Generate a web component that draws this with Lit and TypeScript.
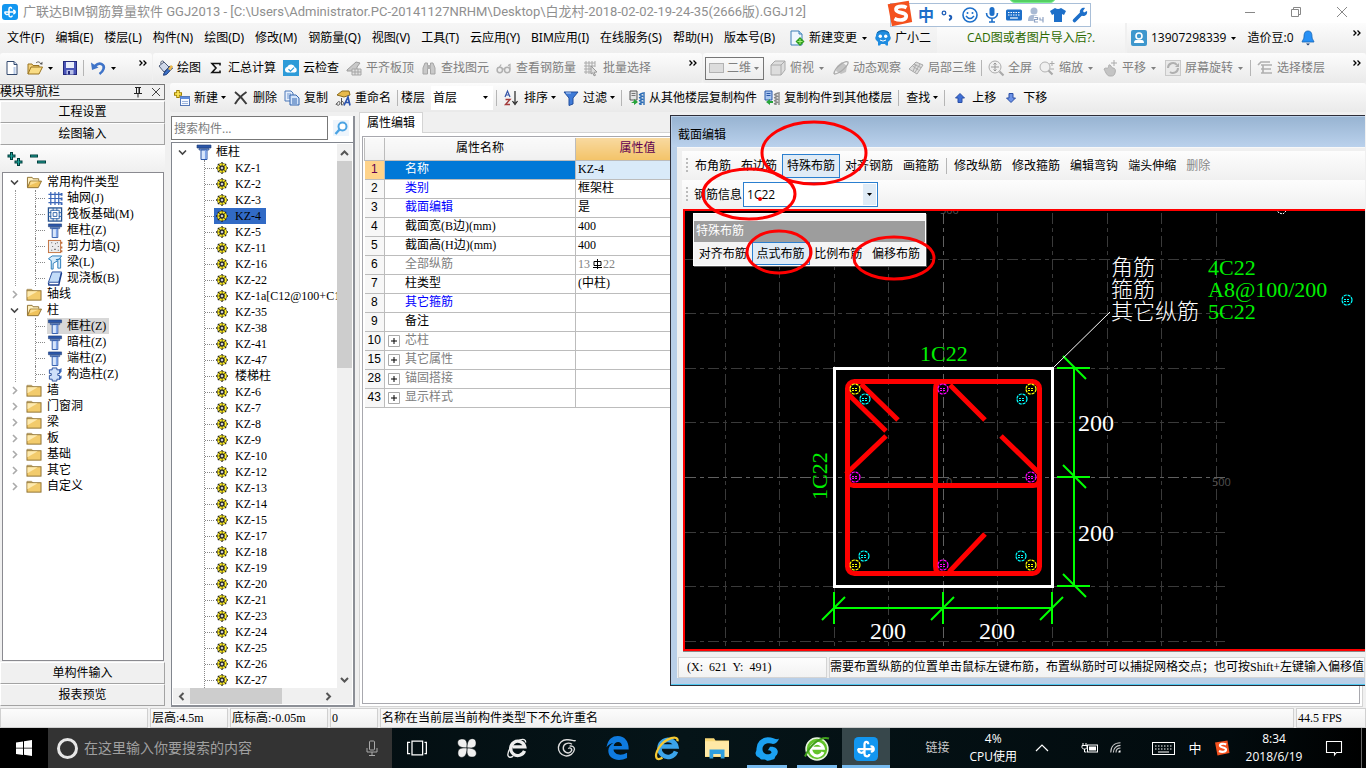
import { LitElement, html, css, svg, nothing, TemplateResult } from "lit";
import { customElement, state } from "lit/decorators.js";
import { classMap } from "lit/directives/class-map.js";

/* ---------- icon set, 16 x 16 unless noted ---------- */
const blueStroke = "#1f5fb8";
const shapes: Record<string, TemplateResult> = {
  app: svg`<rect width="16" height="16" rx="3" fill="#1296f0"/><path d="M9.500 4.800C9.500 2.600 7 2.600 7 5v6.200c0 2.200 3.200 2.200 3.200.2M2.500 8h11M2.800 8c0 2.500 2.400 3.200 4 1.800M11 6.200c2.500-.2 3.200 3.400.2 3.600" fill="none" stroke="#fff" stroke-width="1.500"/>`,
  newfile: svg`<path d="M3 1.500h7l3 3v10H3z" fill="#fff" stroke="#33496e"/><path d="M10 1.500v3h3" fill="#cfdcf2" stroke="#33496e"/><path d="M10.500 7v7" stroke="#b9cbe8" stroke-width="2"/>`,
  open: svg`<path d="M1 14V4h4l1 1.500h6V7" fill="#f4d27c" stroke="#9a7421"/><path d="M1 14 4 7h11.500L12 14z" fill="#f9dc84" stroke="#9a7421"/><path d="M9 3c2-2 4-1 5 1" fill="none" stroke="#555"/><path d="m12.500 4 2.800.8.200-3z" fill="#555"/>`,
  save: svg`<rect x="1.500" y="1.500" width="13" height="13" fill="#4a55b8" stroke="#23297c"/><rect x="4" y="2" width="8" height="6" fill="#e9edfb"/><rect x="4.500" y="10" width="7" height="4.500" fill="#b8c0e8"/><rect x="6" y="11" width="2" height="3.500" fill="#23297c"/>`,
  undo: svg`<path d="M5 6c5-5 10-1 8.500 3-.7 2.400-2.500 4-4 5" fill="none" stroke="#3f74c9" stroke-width="2.600"/><path d="M1 2.500 2 10l6.500-2.500z" fill="#3f74c9"/>`,
  paint: svg`<path d="m2 6 5-4 5 5-5 5z" fill="#cfd8ea" stroke="#4d5b78"/><path d="M4 4c-1-3 2-4 3-2" fill="none" stroke="#4d5b78"/><path d="m7 13 6-7 2.500 2-6 6.500-3 .8z" fill="#3b6fc4" stroke="#1d3d7c"/><path d="m11 9 3-4 2 1.500-2.500 4z" fill="#edb94a"/>`,
  sigma: svg`<path d="M12 5.500V3.500H4L8 8l-4 4.500h8v-2" fill="none" stroke="#111" stroke-width="1.600"/>`,
  cloud: svg`<rect width="16" height="16" fill="#2d9bd8"/><path d="M4 12.500a3 3 0 0 1 .4-5.800 4 4 0 0 1 7.400.6 2.700 2.700 0 0 1 0 5.200z" fill="#fff"/><path d="m5.500 9.300 2 1.900 3.500-3.600" fill="none" stroke="#2d9bd8" stroke-width="1.300"/>`,
  gslab: svg`<path d="m1 10 9-8 4 1-3 4v4H1z" fill="#c9c9c9" stroke="#9d9d9d"/><path d="M6 9h9v6H6z M6 12h9 M9 9v6 M12 9v6" fill="#e2e2e2" stroke="#a5a5a5"/>`,
  binoc: svg`<path d="M2 14V8l2-5h2.500v11z M9.500 14V3H12l2 5v6z" fill="#c9c9c9" stroke="#a5a5a5"/><rect x="6" y="5" width="4" height="4" fill="#b0b0b0"/>`,
  glasses: svg`<circle cx="3.800" cy="10" r="2.700" fill="#eee" stroke="#b0b0b0" stroke-width="1.500"/><circle cx="11.200" cy="10" r="2.700" fill="#eee" stroke="#b0b0b0" stroke-width="1.500"/><path d="M6.500 9.500c.6-.8 1.400-.8 2 0 M14 9.500V4.500l-2 1 M3.500 7l1.700-2.500" fill="none" stroke="#b0b0b0" stroke-width="1.200"/>`,
  batch: svg`<path d="M1 3h11M1 6h11M1 9h7M1 12h7M3 1v13M6 1v13M9 1v6M12 1v6" stroke="#aaa"/><path d="m8 6 6 6-3 .3 1.500 3-1.500.5-1.300-3L8 14z" fill="#ddd" stroke="#999"/>`,
  flat: svg`<rect x=".5" y="3.500" width="14" height="9" fill="#dcdcdc" stroke="#b2b2b2"/>`,
  cube: svg`<path d="M1 5 5 1h10v9l-4 5H1z" fill="#ddd" stroke="#aaa"/><path d="M1 5h10v10M11 5l4-4" fill="none" stroke="#aaa"/>`,
  orbit: svg`<path d="M4 6 9 2l5 4-1 6-5 2-5-3z" fill="#c4c4c4"/><path d="M1 14C1 8 12 0 15 2c1 3-8 12-14 12" fill="none" stroke="#aaa" stroke-width="1.300"/>`,
  part3d: svg`<path d="M1 9 8 2l7 3-6 9z" fill="#dedede" stroke="#aaa"/><path d="m4.500 6 6 4M8 4 5 11.500M12 4 7 12.500M6 4.500l7 3" stroke="#aaa" fill="none"/>`,
  full: svg`<circle cx="7" cy="7" r="6" fill="#f1f1f1" stroke="#adadad"/><path d="M7 3v8M3 7h8M5.500 4.500 7 3l1.500 1.500M5.500 9.500 7 11l1.500-1.500" fill="none" stroke="#999"/><path d="m11.500 11.500 4 4" stroke="#aaa" stroke-width="2.200"/>`,
  zoom: svg`<circle cx="6" cy="7" r="5" fill="#f0f0f0" stroke="#b3b3b3"/><path d="m9.500 10.500 4 4" stroke="#aaa" stroke-width="2.200"/><path d="M13 1v5M10.500 3.500h5M11 9h4" stroke="#aaa"/>`,
  pan: svg`<path d="M2 9c2-2 3 0 4-1s0-4 2-3 1 3 3 3 3 2 2 5-2 3-5 3-4-3-6-7" fill="#c4c4c4" stroke="#b0b0b0"/><path d="M12 0v6M9 3h6" stroke="#aaa"/>`,
  rotate: svg`<rect x=".5" y=".5" width="15" height="15" fill="#e9e9e9" stroke="#c9c9c9"/><path d="M3 8a5 5 0 0 1 9-3M13 8a5 5 0 0 1-8 4" fill="none" stroke="#b0b0b0" stroke-width="2"/><path d="m10 7 4 0V3z" fill="#b0b0b0"/>`,
  floors: svg`<path d="m1 5 3-3h9M4 5h11M4 9h10M4 13h11M6 5v8" fill="none" stroke="#b0b0b0" stroke-width="1.700"/>`,
  change: svg`<path d="M2 1h8l3 3v11H2z" fill="#eef6fd" stroke="#3c7fb6"/><path d="M10 1v3h3" fill="#b9d9ef" stroke="#3c7fb6"/><path d="m11 7 4.500 4.500L11 16l-4.500-4.500z" fill="#2f9e1e"/><path d="M11 9v5M8.500 11.500h5" stroke="#a5f07a"/>`,
  mascot: svg`<path d="M1 6C1 2 4 0 8 0s7 2 7 6c1 1 1 3 0 4l-2 2v3.500h-2L10 14H6l-1 1.500H3V12L1 10C0 9 0 7 1 6" fill="#1f8ce0"/><path d="M2 3c3-3 9-3 12 0" fill="none" stroke="#17639f"/><circle cx="5.300" cy="6.300" r="1.700" fill="#fff"/><circle cx="10.700" cy="6.300" r="1.700" fill="#fff"/><path d="M5 10q3 2.200 6 0" fill="none" stroke="#fff"/>`,
  user: svg`<rect width="16" height="16" rx="2" fill="#3e97cd"/><circle cx="8" cy="6" r="3" fill="none" stroke="#fff" stroke-width="1.600"/><path d="M3 13c0-4 3-3 5-3s5-1 5 3z" fill="#fff"/>`,
  bell: svg`<path d="M8 1c-3.500 0-4 3-4 6 0 2-1.500 3-2 5h12c-.5-2-2-3-2-5 0-3-.5-6-4-6z" fill="#2790f5" stroke="#1464b5" stroke-width=".8"/><path d="M6 13.500h4L8 15.500z" fill="#1a3e74"/>`,
  create: svg`<path d="M4 0v8M0 4h8" stroke="#a08000" stroke-width="3.500"/><path d="M4 1v6M1 4h6" stroke="#ffe95a" stroke-width="1.700"/><rect x="6.500" y="6.500" width="9" height="9" fill="#f6f9ff" stroke="#5577b5"/><path d="M6.500 8h9" stroke="#5d8ce0" stroke-width="2"/><path d="M8 11.500h6M8 13.500h6" stroke="#9cb4dc"/>`,
  del: svg`<path d="M2 2c4 3 8 7 11.500 12M13.500 2C9 5 5 9 2 14" fill="none" stroke="#3c3c3c" stroke-width="2"/>`,
  copy: svg`<path d="M1 1h6l2 2v8H1z" fill="#e6effc" stroke="#4d78b8"/><path d="M3 4h4M3 6h3M3 8h3" stroke="#6d95d0"/><path d="M6 5h6l3 3v7H6z" fill="#d4e5fb" stroke="#3264ad"/><path d="M8 9h5M8 11h5M8 13h5" stroke="#3264ad"/>`,
  rename: svg`<path d="m2 5 5-4h7l1 4-6 2z" fill="#e7b94b" stroke="#8a6a1c"/><path d="M1 15c1-3 4-5 4-2s-4 3-3 0M6.500 8v7c3 0 3-4 0-3.500" fill="none" stroke="#555"/><path d="m9 15.500 4-8.500 2 8.500M10.500 12.500H15" fill="none" stroke="#2b53ae" stroke-width="1.700"/>`,
  sort: svg`<path d="m1 7 2.500-6L6 7M2 5h3" fill="none" stroke="#3555a8" stroke-width="1.200"/><path d="M1.500 9.500H6l-4.500 5H6" fill="none" stroke="#a33a3a" stroke-width="1.400"/><path d="M11 1v12M8.500 11l2.500 3.500 2.500-3.500" fill="none" stroke="#222" stroke-width="1.200"/>`,
  filter: svg`<path d="M1 2h14L10 8v6l-4 1.500V8z" fill="#3f7bd8" stroke="#234f9c"/><path d="M3 3h5" stroke="#b8d3f8"/>`,
  copyfrom: svg`<path d="M1 1h7v9H1z" fill="#e3e3e3" stroke="#555"/><path d="M2.500 3.500h4M2.500 5.500h4" stroke="#777"/><path d="M12 3v12M10 5l4-2M10 8l4-2M10 11l4-2M10 14l4-2M15 2v13" fill="none" stroke="#2c6cb5" stroke-width="1.400"/><path d="M2 13h3v2l4-3-4-3v2" fill="#26a33a"/>`,
  copyto: svg`<path d="M1 1h7v9H1z" fill="#a9c6f1" stroke="#2a58a8"/><path d="M2.500 3.500h4M2.500 5.500h4" stroke="#2a58a8"/><path d="M12 3v12M10 5l4-2M10 8l4-2M10 11l4-2M10 14l4-2M15 2v13" fill="none" stroke="#888" stroke-width="1.400"/><path d="M9 11H6V9l-4 3 4 3v-2h3" fill="#26a33a"/>`,
  up: svg`<path d="m8 3.500 4.500 4.500H10v4.500H6V8H3.500z" fill="#3f6fd6" stroke="#2a4fa5"/>`,
  down: svg`<path d="M8 12.500 3.500 8H6V3.500h4V8h2.500z" fill="#6c92e6" stroke="#2a4fa5"/>`,
  search: svg`<rect width="16" height="16" fill="#eef5fc"/><circle cx="9.500" cy="6.500" r="4" fill="#fff" stroke="#4ba3e3" stroke-width="2"/><path d="m6.500 9.500-4 4.500" stroke="#4ba3e3" stroke-width="2.400"/>`,
  folder: svg`<path d="M.5 4V2.500h5L7 4" fill="#f7e3a0" stroke="#a89060"/><rect x=".5" y="4" width="15" height="10" fill="#f2cb6c" stroke="#8d6f30"/><path d="M1 4.500h11L1 11z" fill="#fdeab0"/>`,
  folderopen: svg`<path d="M1 13V2.500h5L7 4h6v2" fill="#fff0bf" stroke="#8d6f30"/><path d="M1 13.500 4 6.500h12l-3.500 7z" fill="#f0c35c" stroke="#8d6f30"/><path d="M4.500 7h9l-10 4z" fill="#fbdf95"/>`,
  grid: svg`<path d="M1 3.500h14M1 8h14M1 12.500h14M3.500 1v14M8 1v14M12 1v14" stroke="#3b66b8" stroke-width="1.300"/><path d="M14 2h2v3h-2zM14 7h2v3h-2zM14 12h2v3h-2z" fill="#3b66b8"/>`,
  raft: svg`<rect x="1" y="1" width="14" height="14" fill="#fff" stroke="#23508f" stroke-width="1.400"/><path d="M3.500 3.500h9v9h-9zM6 6h4v4H6zM6 1v3M10 1v3M6 12v3M10 12v3M1 6h3M1 10h3M12 6h3M12 10h3" fill="none" stroke="#2b62a8"/>`,
  column: svg`<path d="M1 1h14v3H1z" fill="#2b56a8" stroke="#1b3974" stroke-width=".6"/><path d="M3 4.500h10V6H3z" fill="#7ea4e6" stroke="#1b3974" stroke-width=".6"/><path d="M5 6h6v9.500H5z" fill="#d8e6fb" stroke="#2b56a8"/><path d="M9.700 6.500v8.500" stroke="#7fa5ea" stroke-width="1.500"/>`,
  wall: svg`<rect x="1" y="1.500" width="13" height="13" fill="#ececec" stroke="#c2703c"/><path d="M15 3v2M15 8v2M15 12v2" stroke="#c2703c" stroke-width="1.700"/><path d="M4 4h1M8 5h1M11 8h1M5 8h1M7 11h2M4 12h1M11 12h1M10 4h1" stroke="#555"/>`,
  beam: svg`<path d="m1 4 4-3h10l-3 4H9l5-1v10h-3V6L6 9v6H4V6z" fill="#d6ebfb" stroke="#2579b8"/>`,
  slab: svg`<path d="M5 1h10l-3 11H1z" fill="#c3dcf8" stroke="#2a4f9d"/><path d="m1 12.500.5 2.500H12l3-13" fill="none" stroke="#1b3d8c" stroke-width="1.500"/>`,
  struct: svg`<path d="M5 1h5v2h3v4h-2v2h2v4h-3v2H5v-2H2V9h2V7H2V3h3z" fill="#cfe0fa" stroke="#2a4f9d"/><path d="m12 3 3-2v4l-2 2M13 10l2-1v3l-3 2" fill="#3a65b5"/>`,
  rebar: svg`<path d="M8 0v16M0 8h16M2.500 2.500l11 11M13.500 2.500l-11 11" stroke="#222" stroke-width="1.800"/><circle cx="8" cy="8" r="5" fill="none" stroke="#222" stroke-width="3.600"/><circle cx="8" cy="8" r="5" fill="none" stroke="#ffee20" stroke-width="2.600" stroke-dasharray="3.100 .83"/><circle cx="8" cy="8" r="2" fill="#fff" stroke="#222"/>`,
  plusplus: svg`<path d="M4.500 1v8M.5 5h8M11.500 7v8M7.500 11h8" stroke="#003f3c" stroke-width="3"/><path d="M4.500 2v6M1.500 5h6M11.500 8v6M8.500 11h6" stroke="#1fa39a" stroke-width="1"/>`,
  minusminus: svg`<path d="M0 5h8M7 11h9" stroke="#003f3c" stroke-width="3"/><path d="M1 5h6M8 11h7" stroke="#1fa39a" stroke-width="1"/>`,
  pin: svg`<path d="M5 3.500h6M6.500 3.500v6M9.500 3.500v6M4 9.500h8M8 9.500v4" fill="none" stroke="#222"/><path d="M9 4v5" stroke="#222"/>`,
  close: svg`<path d="m4 4 8 8M12 4l-8 8" stroke="#444"/>`,
  smile: svg`<circle cx="8" cy="8" r="7" fill="none" stroke="#1d6fc9" stroke-width="1.600"/><circle cx="5.500" cy="6" r="1" fill="#1d6fc9"/><circle cx="10.500" cy="6" r="1" fill="#1d6fc9"/><path d="M4 9q4 5 8 0" fill="none" stroke="#1d6fc9" stroke-width="1.500"/>`,
  mic: svg`<rect x="5.500" y="0" width="5" height="9" rx="2.500" fill="#1d6fc9"/><path d="M2.500 6c0 7 11 7 11 0M8 11v4M5 15h6" fill="none" stroke="#1d6fc9" stroke-width="1.600"/>`,
  keys: svg`<rect y="2.500" width="16" height="11" rx="1.500" fill="#1d6fc9"/><path d="M2 5.500h12M2 8h12" stroke="#fff" stroke-width="1.200" stroke-dasharray="1.500 1"/><path d="M4 11h8" stroke="#fff" stroke-width="1.200"/>`,
  person: svg`<circle cx="6" cy="4" r="3.500" fill="#a9bad4"/><path d="M0 14c0-6 3-6 6-6s5 1 5 3v3z" fill="#a9bad4"/><path d="M6 10h4v2.500H7V15h4M12 10v3h3M15 9.500V16" fill="none" stroke="#fff" stroke-width="2.600"/><path d="M6.500 10.500h3v2h-3V15h3.500M12 10.500V13h3M15 10v5.500" fill="none" stroke="#8fa3c4" stroke-width="1.200"/>`,
  shirt: svg`<path d="M5 1q3 2 6 0l5 3-2 4-2-1v8H4V7L2 8 0 4z" fill="#1d6fc9"/>`,
  wrench: svg`<path d="M2.500 13.500 9 7" stroke="#1d6fc9" stroke-width="3.600" stroke-linecap="round"/><path d="M8 6c-1-4 3-6 5-5l-2 3 1 1.500L15 4c1 4-3 6-6 4.500" fill="#1d6fc9"/>`,
  sogou: svg`<path d="M1 2.500 13.500.5l2 12.500-12 2.500z" fill="#f4511e"/><path d="M12.200 4.500c-3-1.500-6.700-.5-6.200 1.500s6 1 6 3.500-4 3-7 1.500" fill="none" stroke="#fff" stroke-width="2.200"/>`,
  taskview: svg`<rect x="4" y="2.500" width="8.500" height="11" fill="none" stroke="#fff"/><path d="M2.500 3.500h-2v9h2M14 3.500h1.500v9H14" fill="none" stroke="#fff"/>`,
  clover: svg`<g fill="#f0f0f0" stroke="#050f12" stroke-width=".5"><path d="M8 8C3 8 .5 6.500.5 3.800.5 1 3 .5 5 .8 7.500 1 8.500 4 8 8z"/><path d="M8 8C8 3 9.500.5 12.200.5c2.800 0 3.300 2.500 3 4.500C15 7.500 12 8.500 8 8z"/><path d="M8 8c5 0 7.500 1.500 7.500 4.200 0 2.800-2.500 3.300-4.500 3C8.500 15 7.500 12 8 8z"/><path d="M8 8c0 5-1.500 7.500-4.200 7.500-2.800 0-3.300-2.500-3-4.500C1 8.500 4 7.500 8 8z"/></g>`,
  iewhite: svg`<path d="M14 10.300a5.700 5.700 0 1 1 .2-3.300H4.500" fill="none" stroke="#eee" stroke-width="2.600"/><path d="M15 3.500C15-1 7 1 2.500 8-1 14 1 17 5 14.500" fill="none" stroke="#eee" stroke-width="1.100"/>`,
  swirl: svg`<path d="M15 2c-2 1-3-1-7-.6A6.500 6.500 0 1 0 14 9c0-2-2-3-4-2.500M12 5C9 3 5 4.500 5 8s4 5 6 3-.500-4-2-2.500" fill="none" stroke="#ddd" stroke-width="1.100"/>`,
  edge: svg`<path d="M1 7.500C2 2 5 0 8.500 0 13 0 16 3.500 15.800 9H5.700c.3 3.500 5 4.500 9 2.200v3.400C9 17.500 2.200 15.500 2.200 9.800c0-2.500 1.500-4.300 3.500-5.200C3.500 5 2 6 1 7.500zM5.800 6.600h5.500c0-3.500-5-3.500-5.500 0z" fill="#0f7be0"/>`,
  ie: svg`<path d="M14 10.300a5.700 5.700 0 1 1 .2-3.300H4.500" fill="none" stroke="#3ba4ea" stroke-width="3"/><path d="M15 3.500C16-1 7 1 2.500 8-1 14 1 17 5 14.500" fill="none" stroke="#f5c933" stroke-width="1.500"/>`,
  explorer: svg`<path d="M0 1.500h6l1 1.500h9v11H0z" fill="#f9d978"/><path d="M0 3.500h16v10H0z" fill="#ffe9a6"/><path d="M3 15V9h10v6h-2.500v-3h-5v3z" fill="#2e9fe0"/>`,
  gbrowser: svg`<path d="M16 1c-1.500 1.500-3.500-.8-7.500-.8A7.500 7.500 0 0 0 1 8c0 2-1 2-.5 3.500.5 2 2 1.500 3 3 1 1 2.500 0 4 1s3-.5 4.500-.5 1-2 2.500-3C16.500 9 14 6 10 6.500L8.500 9c1-.5 2.500 0 2.500 1.500C9 12.500 5 11.500 5 8c0-4 4.500-4.500 7-3.300C14 4.500 15.500 3 16 1z" fill="#1ba1f2"/>`,
  greene: svg`<circle cx="8" cy="8" r="7.300" fill="#63c22b" stroke="#e9f6e0"/><path d="M12 10a4.200 4.200 0 1 1 .2-2.500H5" fill="none" stroke="#fff" stroke-width="2"/><path d="M16 1C10-1 3 6 0 13" fill="none" stroke="#3f9e1c" stroke-width="1.300"/>`,
  chevup: svg`<path d="m0 12 8-8 8 8" fill="none" stroke="#fff" stroke-width="1.600"/>`,
  battery: svg`<rect x="5.500" y="5" width="10" height="7" fill="none" stroke="#fff"/><rect x="7" y="6.500" width="7" height="4" fill="#fff"/><path d="M1 3v2M4 3v2M0 5.500h5v2c0 2-5 2-5 0zM2.500 9v3h2" fill="none" stroke="#fff"/>`,
  wifi: svg`<path d="M1 14C1 6 6 1 14 1M4.500 14c0-5.500 4-9.500 9.500-9.500M8 14c0-3.500 2.500-6 6-6" fill="none" stroke="#ccc" stroke-width="1.500"/><path d="M11 14a3 3 0 0 1 3-3v3z" fill="#fff"/>`,
  tnotes: svg`<path d="M.5 1.500h15v11h-5L8.500 15v-2.500h-8z" fill="none" stroke="#fff" stroke-width="1.100"/>`,
  tmic: svg`<rect x="5.500" y="1" width="5" height="9" rx="1" fill="none" stroke="#aaa"/><path d="M3 8v4h10V8M8 12v3M5 15.500h6" fill="none" stroke="#aaa"/>`,
  win: svg`<path d="m0 2.500 7-1v6.200H0zM8 1.300 16 0v7.700H8zM0 8.600h7V15l-7-1zM8 8.600h8V16l-8-1.200z" fill="#fff"/>`,
};
const ico = (name: string, size = "") =>
  html`<svg class="ico ${size}" viewBox="0 0 16 16" aria-hidden="true">${shapes[name]}</svg>`;
const arrow = html`<svg class="arrow" viewBox="0 0 5 3" aria-hidden="true"><path d="M0 0h5L2.500 3z" fill="currentColor"/></svg>`;
const more = html`<button class="more" aria-label="更多"><svg viewBox="0 0 8 6" aria-hidden="true"><path d="m.5.500 2.500 2.500L.5 5.500M4.500.500 7 3 4.500 5.500" fill="none" stroke="#000" stroke-width="1.300"/></svg></button>`;

const shared = css`
  * { box-sizing: border-box; }
  button, input, select { font: inherit; color: inherit; margin: 0; border: 0; padding: 0; background: none; border-radius: 0; outline: 0; }
  button { white-space: nowrap; cursor: default; }
  .ico { width: 16px; height: 16px; flex: none; display: block; overflow: visible; }
  .ico.big { width: 24px; height: 24px; }
  .ico.mid { width: 20px; height: 20px; }
  .ico.small { width: 12px; height: 12px; }
  .arrow { width: 5px; height: 3px; flex: none; }
  .sep { width: 1px; height: 16px; background: #b5b5b5; flex: none; }
`;

/* ---------- section editor window ---------- */
const cellX = [725, 779, 834, 888, 943, 997, 1052, 1107, 1161, 1216];
const cellY = [259, 313, 368, 422, 477, 532, 586, 641];
const bars: Array<[number, number, string]> = [
  [855, 389, "#ff0"], [1031, 389, "#ff0"], [855, 565, "#ff0"], [1031, 565, "#ff0"],
  [943, 389, "#f0f"], [855, 477, "#f0f"], [1031, 477, "#f0f"], [943, 565, "#f0f"],
  [865, 399, "#0ff"], [1022, 399, "#0ff"], [864, 556, "#0ff"], [1021, 556, "#0ff"], [1347, 300, "#0ff"],
];

@customElement("section-editor")
export class SectionEditor extends LitElement {
  @state() private mode = "特殊布筋";
  @state() private layout = "点式布筋";

  static styles = [shared, css`
    :host { display: flex; flex-direction: column; border: 1px solid #2d2d38; border-right: 0; background: #b9cfe8; padding: 1px 0 0 1px; box-shadow: inset 0 -1px 0 #4fc8f0; }
    .title { height: 30px; flex: none; padding: 3px 6px 0; line-height: 30px; background: linear-gradient(#98b4d2, #bad1ec); }
    .frame { flex: 1; min-height: 0; margin: 0 0 7px 5px; display: flex; flex-direction: column; background: #f0f0f0; border-top: 1px solid #f8f8f8; }
    .tools { height: 29px; flex: none; margin: 3px 0 0 5px; padding: 0 4px; display: flex; align-items: center; background: linear-gradient(#fdfdfd, #f0f0f0); }
    .tools.info { margin-top: 0; }
    .tools button { height: 24px; padding: 0 4px; border: 1px solid transparent; }
    .tools button.on, .float button.on { background: #dfebf6; border-color: #2a7fd0; }
    .tools .sep { margin: 0 2px; }
    .grip { width: 2px; height: 16px; margin-right: 2px; background: repeating-linear-gradient(#bbb 0 2px, transparent 2px 4px); }
    .info .grip { margin-right: 6px; }
    .off { color: #888; }
    .combo { display: flex; width: 135px; height: 25px; margin-left: 1px; border: 1px solid #2a7fd0; background: #fff; }
    .combo input { flex: 1; min-width: 0; padding: 0 3px; }
    .combo button { width: 13px; height: auto; margin: 1px; padding: 0; background: #dfebf6; border: 0; display: flex; align-items: center; justify-content: center; }
    .view { position: relative; flex: 1; min-height: 0; margin: 0 0 0 6px; border: 2px solid #f00; border-right: 0; background: #000; box-shadow: 0 1px 0 #888; }
    .view > svg { display: block; width: 100%; height: 100%; }
    .cjk { font: 300 22px "Noto Sans CJK SC", sans-serif; fill: #fff; }
    .num { font: 24px "Liberation Serif", serif; fill: #fff; }
    .code { font: 22px "Liberation Serif", serif; fill: #00f000; }
    .axis { font: 11px "Open Sans", sans-serif; fill: #505050; }
    .float { position: absolute; left: 8px; top: 2px; width: 233px; padding-top: 7px; background: #f4f4f4; border: 1px solid #fff; box-shadow: 1px 1px 0 #555; }
    .float h2 { margin: 0; height: 21px; padding-left: 2px; font-size: 12px; font-weight: 400; line-height: 20px; color: #fff; background: #9d9d9d; }
    .float div { display: flex; }
    .float button { flex: 1; height: 23px; border: 1px solid transparent; }
    .foot { height: 21px; flex: none; display: grid; grid-template-columns: 149px minmax(0, 1fr); gap: 2px; margin: 6px 0 0 1px; font-family: "Liberation Serif", "Noto Sans CJK SC", serif; line-height: 19px; }
    .foot span { border: 1px solid #d4d4d4; background: linear-gradient(#fdfdfd, #f2f2f2); overflow: hidden; white-space: nowrap; }
    .foot .pos { padding-left: 8px; white-space: pre; }
    .notes { position: absolute; left: 0; top: 0; width: 280px; height: 180px; overflow: visible; pointer-events: none; }
  `];

  private tool(label: string, off = false) {
    return html`<button class=${classMap({ on: this.mode === label, off })} @click=${() => (this.mode = label)}>${label}</button>`;
  }

  private dim(x: number, y: number, vertical: boolean) {
    return vertical
      ? svg`<path d="M${x - 17} ${y}h33M${x - 11} ${y - 12}l23 23"/>`
      : svg`<path d="M${x} ${y - 16}v32M${x - 12} ${y + 12}l23 -23"/>`;
  }

  private drawing() {
    return html`<svg role="img" aria-label="柱截面"><g transform="translate(-685 -211)">
      <g stroke="#3a3a3a" fill="none" stroke-dasharray="11 4 4 4">
        ${cellX.map((x) => svg`<path d="M${x}.5 213V649" stroke=${x === 943 ? "#606060" : "#3a3a3a"}/>`)}
        ${cellY.map((y) => svg`<path d="M685 ${y}.5H1225" stroke=${y === 477 ? "#606060" : "#3a3a3a"}/>`)}
      </g>
      <text class="axis" x="940" y="214">500</text><text class="axis" x="1212" y="486">500</text><text class="axis" x="946" y="486">0</text>
      <rect x="834.5" y="368.500" width="218" height="218" fill="none" stroke="#fff" stroke-width="3"/>
      <g fill="none" stroke="#f00" stroke-width="5">
        <rect x="847.500" y="381.500" width="192" height="192" rx="7"/>
        <path d="M941 381.500q-5.500 0-5.500 8V566q0 7.500 5.500 7.500M847.500 477q0 8.500 6 8.500H1033q6.500 0 6.500-7"/>
        <path d="m848 394 38 37M861 384l37 36M886 436l-40 38M950 385l35 35M1001 436l39 38M985 534l-36 38"/>
      </g>
      ${bars.map(([x, y, c]) => svg`<circle cx=${x} cy=${y} r="5" fill="#000" fill-opacity=".6" stroke=${c} stroke-width="1.200" stroke-dasharray="3.100 .830"/><path d="M${x - 3} ${y - 1}.5h2m1 0h2m-5 2h2m1 0h2" stroke=${c}/>`)}
      <g fill="none" stroke="#0f0" stroke-width="2">
        <path d="M1074 368v218M834 608h218"/>
        ${[368, 477, 586].map((y) => this.dim(1074, y, true))}
        ${[834, 943, 1052].map((x) => this.dim(x, 608, false))}
      </g>
      <path d="m1054 367 56-55" stroke="#fff"/>
      <path d="M1276 209l3 4 4 1 3-3" stroke="#fff" fill="none" stroke-dasharray="2 1"/>
      <text class="num" x="1078" y="431">200</text><text class="num" x="1078" y="541">200</text>
      <text class="num" x="870" y="639">200</text><text class="num" x="979" y="639">200</text>
      <text class="code" x="920" y="361">1C22</text>
      <text class="code" transform="translate(827 500) rotate(-90)">1C22</text>
      <text class="cjk" x="1111" y="275">角筋</text><text class="cjk" x="1111" y="297">箍筋</text><text class="cjk" x="1111" y="319">其它纵筋</text>
      <text class="code" x="1208" y="275">4C22</text><text class="code" x="1208" y="297">A8@100/200</text><text class="code" x="1208" y="319">5C22</text>
    </g></svg>`;
  }

  render() {
    return html`
      <div class="title">截面编辑</div>
      <div class="frame">
        <div class="tools"><i class="grip"></i>
          ${["布角筋", "布边筋", "特殊布筋", "对齐钢筋", "画箍筋"].map((t) => this.tool(t))}<i class="sep"></i>
          ${["修改纵筋", "修改箍筋", "编辑弯钩", "端头伸缩"].map((t) => this.tool(t))}${this.tool("删除", true)}
        </div>
        <div class="tools info"><i class="grip"></i><label for="bar">钢筋信息</label>
          <div class="combo"><input id="bar" value="1C22"><button aria-label="展开">${arrow}</button></div>
        </div>
        <div class="view">${this.drawing()}
          <div class="float"><h2>特殊布筋</h2><div>
            ${["对齐布筋", "点式布筋", "比例布筋", "偏移布筋"].map((t) => html`<button class=${classMap({ on: this.layout === t })} @click=${() => (this.layout = t)}>${t}</button>`)}
          </div></div>
        </div>
        <div class="foot"><span class="pos">(X:  621  Y:  491)</span><span>需要布置纵筋的位置单击鼠标左键布筋，布置纵筋时可以捕捉网格交点；也可按Shift+左键输入偏移值</span></div>
      </div>
      <svg class="notes" aria-hidden="true"><g fill="none" stroke="#f00" stroke-width="3">
        <ellipse cx="143" cy="37" rx="52" ry="31"/><ellipse cx="78" cy="78" rx="46" ry="25"/>
        <ellipse cx="108" cy="136" rx="32" ry="21"/><ellipse cx="223" cy="142" rx="40" ry="21"/></g>
        <circle cx="89" cy="83" r="2" fill="#f00"/></svg>`;
  }
}

/* ---------- desktop task bar ---------- */
@customElement("task-bar")
export class TaskBar extends LitElement {
  static styles = [shared, css`
    :host { display: flex; height: 40px; color: #fff; background: linear-gradient(90deg, #02090c, #051418 50%, #020b0e 90%, #000); }
    button { height: 40px; display: flex; align-items: center; justify-content: center; }
    .start { width: 48px; background: #000; }
    .find { width: 344px; background: #333; display: flex; align-items: center; padding: 0 12px 0 9px; gap: 6px; color: #aaa; }
    .ring { width: 21px; height: 21px; border: 3px solid #e6e6e6; border-radius: 50%; flex: none; }
    .find input { flex: 1; min-width: 0; font-size: 14px; }
    .find input::placeholder { color: #a0a0a0; opacity: 1; }
    .apps { display: flex; }
    .apps button { width: 50px; border-bottom: 3px solid transparent; padding-top: 2px; background-clip: padding-box; }
    .apps .run { box-shadow: inset 0 -3px 0 #76b9ed; border: 0; width: 40px; margin: 0 5px; }
    .apps .now { width: 48px; margin: 0; background: #37474b; }
    .tray { margin-left: auto; display: flex; align-items: center; text-align: center; line-height: 18px; }
    .tray button { width: 26px; }
    .tray .wide { width: 36px; }
    .link { margin-right: 20px; color: #ccc; }
    .cpu { margin-right: 12px; }
    .tray .more { margin-right: 22px; }
    .tray .net { margin-right: 16px; }
    .tray .note { width: 54px; }
    .tray .ime { width: 28px; font-size: 13px; }
    .clock { width: 66px; margin-left: 6px; }
    .end { width: 5px; height: 40px; border-left: 1px solid #666; }
    .kb { width: 23px; height: 13px; }
  `];
  render() {
    const names = ["taskview", "clover", "iewhite", "swirl", "edge", "ie", "explorer"];
    return html`
      <button class="start" aria-label="开始">${ico("win")}</button>
      <div class="find"><i class="ring"></i><input aria-label="搜索" placeholder="在这里输入你要搜索的内容">${ico("tmic")}</div>
      <div class="apps">
        ${names.map((n) => html`<button aria-label=${n}>${ico(n, n === "taskview" || n === "swirl" || n === "clover" || n === "iewhite" ? "mid" : "big")}</button>`)}
        <button class="run" aria-label="浏览器">${ico("gbrowser", "big")}</button>
        <button class="run" aria-label="网页">${ico("greene", "big")}</button>
        <button class="run now" aria-label="钢筋算量">${ico("app", "big")}</button>
      </div>
      <div class="tray">
        <span class="link">链接</span><span class="cpu">4%<br>CPU使用</span>
        <button class="more" aria-label="更多">${ico("chevup", "small")}</button>
        <button aria-label="电源">${ico("battery")}</button><button class="net" aria-label="网络">${ico("wifi", "small")}</button>
        <button class="wide" aria-label="键盘"><svg class="kb" viewBox="0 0 23 13"><rect x=".5" y=".5" width="22" height="12" fill="none" stroke="#fff"/><path d="M3 4h17M3 7h17" stroke="#fff" stroke-dasharray="1.500 1.500"/><path d="M6 10h11" stroke="#fff"/></svg></button>
        <button class="ime">中</button><button aria-label="输入法">${ico("sogou")}</button>
        <span class="clock">8:34<br>2018/6/19</span>
        <button class="note" aria-label="通知">${ico("tnotes")}</button><i class="end"></i>
      </div>`;
  }
}

/* ---------- main window ---------- */
interface Node { label: string; icon?: string; open?: boolean; kids?: Array<[string, string]>; }
const modules: Node[] = [
  { label: "常用构件类型", open: true, kids: [["轴网(J)", "grid"], ["筏板基础(M)", "raft"], ["框柱(Z)", "column"], ["剪力墙(Q)", "wall"], ["梁(L)", "beam"], ["现浇板(B)", "slab"]] },
  { label: "轴线" },
  { label: "柱", open: true, kids: [["框柱(Z)", "column"], ["暗柱(Z)", "column"], ["端柱(Z)", "column"], ["构造柱(Z)", "struct"]] },
  ...["墙", "门窗洞", "梁", "板", "基础", "其它", "自定义"].map((label) => ({ label })),
];
const members = ["KZ-1", "KZ-2", "KZ-3", "KZ-4", "KZ-5", "KZ-11", "KZ-16", "KZ-22", "KZ-1a[C12@100+C10", "KZ-35", "KZ-38", "KZ-41", "KZ-47", "楼梯柱",
  "KZ-6", "KZ-7", "KZ-8", "KZ-9", "KZ-10", "KZ-12", "KZ-13", "KZ-14", "KZ-15", "KZ-17", "KZ-18", "KZ-19", "KZ-20", "KZ-21", "KZ-23", "KZ-24", "KZ-25", "KZ-26", "KZ-27"];
const steel = html`<svg class="steel" viewBox="0 0 9 10" aria-label="Φ"><path d="M4.500 0v10M1 2.500h7v4H1zM0 8.500h9" fill="none" stroke="#000"/></svg>`;
const rows: Array<[number, string, unknown, string]> = [
  [1, "名称", "KZ-4", "sel"], [2, "类别", "框架柱", "key"], [3, "截面编辑", "是", "key"], [4, "截面宽(B边)(mm)", "400", ""],
  [5, "截面高(H边)(mm)", "400", ""], [6, "全部纵筋", html`13 ${steel}22`, "dim"], [7, "柱类型", "(中柱)", ""], [8, "其它箍筋", "", "key"],
  [9, "备注", "", ""], [10, "芯柱", "", "dim group"], [15, "其它属性", "", "dim group"], [28, "锚固搭接", "", "dim group"], [43, "显示样式", "", "dim group"],
];
const menus = ["文件(F)", "编辑(E)", "楼层(L)", "构件(N)", "绘图(D)", "修改(M)", "钢筋量(Q)", "视图(V)", "工具(T)", "云应用(Y)", "BIM应用(I)", "在线服务(S)", "帮助(H)", "版本号(B)"];

@customElement("app-root")
export class AppRoot extends LitElement {
  @state() private picked = "KZ-4";

  static styles = [shared, css`
    :host { display: flex; flex-direction: column; height: 100vh; overflow: hidden; position: relative; background: #f0f0f0; color: #000; font: 12px/16px "Open Sans", "Noto Sans CJK SC", sans-serif; }
    .titlebar { height: 23px; flex: none; display: flex; align-items: center; gap: 5px; padding: 0 16px 0 2px; background: #fff; color: #8f8f8f; }
    .titlebar h1 { margin: 0; font: 13px/22px Roboto, "Noto Sans CJK SC", sans-serif; flex: 1; white-space: nowrap; }
    .wins { display: flex; gap: 30px; }
    .menubar { height: 30px; flex: none; display: grid; grid-template-columns: minmax(0, 1fr) 188px 241px; background: linear-gradient(#f6f6f6, #eee); }
    .menus, .account { display: flex; align-items: center; }
    .menus { padding-left: 3px; overflow: hidden; font-family: "Noto Sans", "Noto Sans CJK SC", sans-serif; }
    .menus > button { height: 22px; padding: 0 4px; margin-right: 3px; }
    .menus > .tool { padding: 0 3px; margin: 0; }
    .menus > .tool:nth-last-child(2) { margin-left: 4px; }
    .menubar a { color: #2d6a00; text-decoration: none; text-align: center; line-height: 30px; background: linear-gradient(#fdfdfd, #f1f1f1); }
    .account { gap: 6px; background: linear-gradient(#fcfcfc, #ececec); border-left: 2px solid #f0f0f0; }
    .tool { display: inline-flex; align-items: center; gap: 4px; height: 24px; padding: 0 3px 0 4px; }
    .tool .arrow { margin: 0 2px 0 1px; }
    .more { align-self: flex-start; margin: 7px 5px 0 auto; width: 8px; height: 8px; display: flex; }
    .more svg { width: 8px; height: 6px; }
    .bars { height: 30px; flex: none; display: grid; grid-template-columns: 152px 549px minmax(0, 1fr); gap: 1px; }
    .bar { display: flex; align-items: center; min-width: 0; overflow: hidden; background: linear-gradient(#fcfcfc, #eaeaea); border-radius: 3px; }
    .bar .off { color: #808080; }
    .bar .sep { margin: 0 2px; }
    .bar.edit .sep { margin: 0 3px; }
    .bar.edit .arrow { margin: 0 0 0 -1px; }
    .pick { display: inline-flex; align-items: center; height: 23px; border: 1px solid #767676; color: #808080; padding: 0 4px 0 3px; gap: 2px; margin: 0 2px; }
    select { appearance: none; }
    .body { flex: 1; min-height: 0; display: grid; grid-template-columns: 166px minmax(0, 1fr); gap: 4px; position: relative; }
    .nav { display: flex; flex-direction: column; padding: 1px 1px 3px 0; font-family: "Liberation Serif", "Noto Sans CJK SC", serif; }
    .nav header { display: flex; align-items: center; height: 16px; flex: none; border: 1px solid #777; border-left: 0; gap: 2px; line-height: 14px; margin-bottom: 1px; }
    .nav header span { flex: 1; }
    .wide { height: 22px; flex: none; border: 1px solid #a3a3a3; border-top-color: #fff; border-left-color: #fff; background: #f0f0f0; }
    .nav .mini { height: 27px; flex: none; display: flex; align-items: center; gap: 7px; padding-left: 7px; background: linear-gradient(#fdfdfd, #efefef); }
    .tree { flex: 1; min-height: 0; margin: 0 1px 1px 2px; border: 1px solid #8a8a90; background: #fff; overflow: hidden; }
    ul { list-style: none; margin: 0; padding: 0; }
    .tree > ul { padding-top: 1px; }
    .row { display: flex; align-items: center; height: 16px; line-height: 16px; white-space: nowrap; }
    .row .chev { width: 9px; height: 9px; flex: none; }
    .tree .row { padding-left: 7px; gap: 5px; }
    .tree .row .ico { margin-left: 2px; height: 15px; }
    .tree li ul { margin-left: 12px; border-left: 1px dotted #999; padding-left: 19px; }
    .tree li li::before { content: ""; display: block; float: left; width: 11px; height: 16px; border-left: 1px dotted #888; background: repeating-linear-gradient(90deg, #888 0 1px, #fff 1px 2px) 0 8px / 10px 1px no-repeat; }
    .tree li li .row { padding: 0 3px 0 0; gap: 4px; width: max-content; }
    .tree li li .row .ico { margin: 0; }
    .tree .cur { background: #d8d8d8; }
    .work { display: grid; grid-template-rows: 29px minmax(0, 1fr); min-width: 0; padding-bottom: 2px; }
    .floor { width: 62px; height: 24px; background: #fff; display: inline-flex; align-items: center; padding: 0 5px 0 2px; margin-left: 6px; }
    .floor select { flex: 1; }
    .panes { display: grid; grid-template-columns: 184px minmax(0, 1fr); gap: 4px; padding: 3px 3px 0 1px; min-height: 0; }
    .list { display: flex; flex-direction: column; background: #fff; border-right: 2px solid #8c8f96; border-bottom: 2px solid #8c8f96; min-height: 0; margin-top: 1px; min-width: 0; }
    .query { display: flex; align-items: center; gap: 4px; height: 24px; flex: none; margin-bottom: 2px; }
    .query input { width: 157px; height: 24px; border: 1px solid #777; padding: 0 2px; }
    .query input::placeholder { color: #7d7d7d; opacity: 1; }
    .query button { padding: 0 0 0 1px; }
    .box { flex: 1; min-height: 0; display: grid; grid-template: minmax(0, 1fr) 16px / minmax(0, 1fr) 15px; border: 1px solid #82868e; border-right: 0; border-bottom: 0; padding: 1px; font-family: "Liberation Serif", "Noto Sans CJK SC", serif; }
    .items { overflow: hidden; }
    .items > .row { padding-left: 5px; gap: 4px; }
    .items > .row .ico { margin-left: 5px; }
    .items ul { margin-left: 31px; border-left: 1px dotted #888; }
    .items li { display: flex; }
    .items li::before { content: ""; width: 9px; height: 16px; flex: none; background: repeating-linear-gradient(90deg, #888 0 1px, #fff 1px 2px) 0 8px / 9px 1px no-repeat; }
    .items li .row { gap: 6px; padding: 0 5px 0 1px; }
    .items li .row.cur { background: #316ac5; }
    .items li .ico { width: 12px; height: 12px; margin: 0 1px; }
    .vbar, .hbar { background: #f0f0f0; display: flex; align-items: center; }
    .vbar { flex-direction: column; }
    .vbar i { width: 15px; height: 207px; background: #cdcdcd; }
    .vbar svg, .hbar svg { width: 9px; height: 17px; flex: none; margin: 0 4px; }
    .vbar svg:last-child { margin-top: auto; }
    .hbar svg:last-child { margin-left: auto; }
    .hbar i { width: 92px; height: 16px; background: #cdcdcd; }
    .corner { background: #f0f0f0; }
    .props { display: flex; flex-direction: column; min-width: 0; min-height: 0; font-family: "Liberation Serif", "Noto Sans CJK SC", serif; margin-top: -3px; }
    .tab { align-self: flex-start; height: 21px; flex: none; padding: 0 7px; background: #fff; border: 1px solid #d4d4d4; border-bottom: 0; margin-bottom: -1px; z-index: 1; position: relative; }
    .sheet { flex: 1; min-height: 0; border: 1px solid #d4d4d4; background: #fff; padding: 3px 2px 2px 2px; }
    .inner { height: 100%; border: 1px solid #a8a8ae; padding: 1px; overflow: hidden; }
    table { border-collapse: collapse; table-layout: fixed; width: 335px; }
    .c1 { width: 20px; } .c2 { width: 191px; } .c3 { width: 124px; }
    th, td { height: 19px; padding: 0; border: 1px solid #bcbcbc; font-weight: 400; text-align: left; line-height: 17px; white-space: nowrap; overflow: hidden; }
    thead th { height: 22px; text-align: center; border-top: 0; background: linear-gradient(#fafafa, #f0f0f0); }
    thead th.val { background: linear-gradient(#f8d9a0, #f3c369); color: #600050; }
    tbody th { text-align: center; background: #f7f7f7; border-left: 0; font-family: "Liberation Sans", sans-serif; }
    td.name { padding-left: 20px; }
    td.value { padding-left: 2px; }
    .key .name { color: #00f; }
    .dim td { color: #808080; }
    .group td.name { padding-left: 3px; }
    .group .name span { display: flex; align-items: center; gap: 5px; height: 17px; }
    .fold { width: 12px; height: 12px; flex: none; }
    .sel .name { background: #0078d7; color: #fff; }
    .sel .value { background: #d9eaf9; }
    tbody .sel th, tr.sel th { background: #ffd38a; color: #600050; }
    .steel { width: 9px; height: 10px; vertical-align: -1px; margin-right: 1px; }
    section-editor { position: absolute; left: 670px; right: 1px; top: 32px; bottom: 21px; }
    .status { height: 21px; flex: none; display: grid; grid-template-columns: 148px 78px 98px 48px minmax(0, 1fr) 70px; gap: 2px; font-family: "Liberation Serif", "Noto Sans CJK SC", serif; line-height: 18px; padding-top: 1px; }
    .status span { border: 1px solid #d0d0d0; background: linear-gradient(#fcfcfc, #f0f0f0); padding-left: 1px; white-space: nowrap; }
    .bubble { position: absolute; left: 1009px; top: -15px; width: 47px; height: 18px; background: #55cf63; border: 1px solid #7e8; border-radius: 6px; }
    .ime { position: absolute; left: 890px; top: 3px; width: 201px; height: 24px; display: flex; align-items: center; gap: 6px; padding-left: 27px; background: #fff; border: 1px solid #a9bfd8; color: #1d6fc9; font-size: 16px; font-weight: 700; }
    .ime > .ico.big { position: absolute; left: -5px; top: -4px; width: 27px; height: 27px; }
    .ime .dots { width: 16px; height: 16px; }
  `];

  private tool(icon: string, label: string, off = false, drop = false) {
    return html`<button class=${classMap({ tool: true, off })}>${ico(icon)}${label}${drop ? arrow : nothing}</button>`;
  }
  private chev(open: boolean) {
    return html`<svg class="chev" viewBox="0 0 9 9"><path d=${open ? "M1 2.500 4.500 6 8 2.500" : "m3 1 3.500 3.500L3 8"} fill="none" stroke=${open ? "#444" : "#aaa"} stroke-width="1.600"/></svg>`;
  }
  private tip(d: string) {
    return html`<svg viewBox="0 0 9 17"><path d=${d} fill="none" stroke="#555" stroke-width="2"/></svg>`;
  }

  render() {
    return html`
      <header class="titlebar">${ico("app")}<h1>广联达BIM钢筋算量软件 GGJ2013 - [C:\\Users\\Administrator.PC-20141127NRHM\\Desktop\\白龙村-2018-02-02-19-24-35(2666版).GGJ12]</h1>
        <div class="wins">
          <button aria-label="最小化"><svg class="ico" viewBox="0 0 16 16"><path d="M3 8.500h10" stroke="#888"/></svg></button>
          <button aria-label="还原"><svg class="ico" viewBox="0 0 16 16"><path d="M3.500 5.500h7v7h-7zM5.500 5V3.500h7v7H11" fill="none" stroke="#888"/></svg></button>
          <button aria-label="关闭"><svg class="ico" viewBox="0 0 16 16"><path d="m3 3 10 10M13 3 3 13" stroke="#888"/></svg></button>
        </div>
      </header>
      <nav class="menubar">
        <div class="menus">${menus.map((m) => html`<button>${m}</button>`)}${this.tool("change", "新建变更", false, true)}${this.tool("mascot", "广小二")}</div>
        <a href="#help">CAD图或者图片导入后?.</a>
        <div class="account">${this.tool("user", "13907298339", false, true)}<span>造价豆:0</span>${ico("bell")}${more}</div>
      </nav>
      <div class="bars">
        <div class="bar">${this.tool("newfile", "")}${this.tool("open", "", false, true)}${this.tool("save", "")}<i class="sep"></i>${this.tool("undo", "", false, true)}${more}</div>
        <div class="bar">${this.tool("paint", "绘图")}${this.tool("sigma", "汇总计算")}${this.tool("cloud", "云检查")}${this.tool("gslab", "平齐板顶", true)}${this.tool("binoc", "查找图元", true)}${this.tool("glasses", "查看钢筋量", true)}${this.tool("batch", "批量选择", true)}${more}</div>
        <div class="bar"><span class="pick">${ico("flat")}<select aria-label="视图"><option>二维</option></select>${arrow}</span>
          ${this.tool("cube", "俯视", true, true)}${this.tool("orbit", "动态观察", true)}${this.tool("part3d", "局部三维", true)}<i class="sep"></i>
          ${this.tool("full", "全屏", true)}${this.tool("zoom", "缩放", true, true)}${this.tool("pan", "平移", true, true)}${this.tool("rotate", "屏幕旋转", true, true)}<i class="sep"></i>
          ${this.tool("floors", "选择楼层", true)}${more}</div>
      </div>
      <main class="body">
        <aside class="nav">
          <header><span>模块导航栏</span>${ico("pin")}${ico("close")}</header>
          <button class="wide">工程设置</button><button class="wide">绘图输入</button>
          <div class="mini"><button aria-label="展开">${ico("plusplus")}</button><button aria-label="折叠">${ico("minusminus")}</button></div>
          <div class="tree"><ul>${modules.map((n) => html`<li>
            <div class="row">${this.chev(!!n.open)}${ico(n.open ? "folderopen" : "folder")}${n.label}</div>
            ${n.kids ? html`<ul>${n.kids.map(([t, i]) => html`<li><div class=${classMap({ row: true, cur: n.label === "柱" && t === "框柱(Z)" })}>${ico(i)}${t}</div></li>`)}</ul>` : nothing}
          </li>`)}</ul></div>
          <button class="wide">单构件输入</button><button class="wide">报表预览</button>
        </aside>
        <section class="work">
          <div class="bar edit">${this.tool("create", "新建", false, true)}${this.tool("del", "删除")}${this.tool("copy", "复制")}${this.tool("rename", "重命名")}<i class="sep"></i><label for="floor">楼层</label>
            <span class="floor"><select id="floor"><option>首层</option></select>${arrow}</span><i class="sep"></i>
            ${this.tool("sort", "排序", false, true)}${this.tool("filter", "过滤", false, true)}<i class="sep"></i>
            ${this.tool("copyfrom", "从其他楼层复制构件")}${this.tool("copyto", "复制构件到其他楼层")}<i class="sep"></i>
            <button class="tool">查找${arrow}</button><i class="sep"></i>${this.tool("up", "上移")}${this.tool("down", "下移")}</div>
          <div class="panes">
            <div class="list">
              <div class="query"><input aria-label="搜索构件" placeholder="搜索构件..."><button aria-label="搜索">${ico("search")}</button></div>
              <div class="box">
                <div class="items"><div class="row">${this.chev(true)}${ico("column")}框柱</div>
                  <ul>${members.map((m) => html`<li><div class=${classMap({ row: true, cur: m === this.picked })} @click=${() => (this.picked = m)}>${ico("rebar")}${m}</div></li>`)}</ul></div>
                <div class="vbar">${this.tip("m1 11 3.500-3.500L8 11")}<i></i>${this.tip("m1 7 3.500 3.500L8 7")}</div>
                <div class="hbar">${this.tip("M6.500 5 3 8.500 6.500 12")}<i></i>${this.tip("M2.500 5 6 8.500 2.500 12")}</div><div class="corner"></div>
              </div>
            </div>
            <div class="props">
              <button class="tab">属性编辑</button>
              <div class="sheet"><div class="inner"><table>
                <colgroup><col class="c1"><col class="c2"><col class="c3"></colgroup>
                <thead><tr><th></th><th>属性名称</th><th class="val">属性值</th></tr></thead>
                <tbody>${rows.map(([n, name, value, cls]) => html`<tr class=${cls}><th>${n}</th>
                  <td class="name">${cls.includes("group") ? html`<span><svg class="fold" viewBox="0 0 12 12"><path d="M.5.500h11v11H.5z" fill="#fff" stroke="#aaa"/><path d="M3 6h6M6 3v6" stroke="#000"/></svg>${name}</span>` : name}</td>
                  <td class="value">${value}</td></tr>`)}</tbody>
              </table></div></div>
            </div>
          </div>
        </section>
        <section-editor></section-editor>
      </main>
      <footer class="status"><span></span><span>层高:4.5m</span><span>底标高:-0.05m</span><span>0</span><span>名称在当前层当前构件类型下不允许重名</span><span>44.5 FPS</span></footer>
      <task-bar></task-bar>
      <i class="bubble"></i>
      <div class="ime">${ico("sogou", "big")}<span>中</span><svg class="dots" viewBox="0 0 16 16"><circle cx="4" cy="6" r="1.800" fill="none" stroke=${blueStroke} stroke-width="1.300"/><path d="M9 9c3-1 3 3 0 4" fill="none" stroke=${blueStroke} stroke-width="2"/></svg>
        ${["smile", "mic", "keys", "person", "shirt", "wrench"].map((n) => ico(n))}</div>`;
  }
}
